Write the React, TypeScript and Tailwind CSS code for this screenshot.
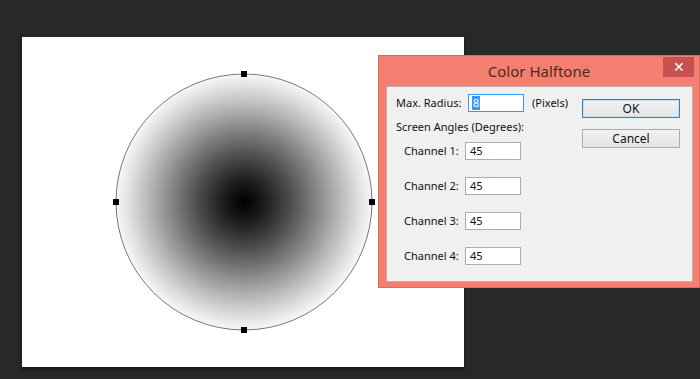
const font = { fontFamily: '"Noto Sans", "Open Sans", sans-serif' }

function Field({ value, selected }: { value: string; selected?: boolean }) {
  return (
    <div
      className={
        selected
          ? 'w-[56px] h-[18px] shrink-0 bg-white border border-[#3399ff] flex items-center pl-[3px]'
          : 'w-[56px] h-[18px] shrink-0 bg-white border border-[#abadb3] flex items-center pl-[4px]'
      }
    >
      {selected ? (
        <span className="bg-[#3399ff] text-white leading-[14px] px-[1px]">{value}</span>
      ) : (
        <span className="leading-[14px]">{value}</span>
      )}
    </div>
  )
}

function Circle() {
  return (
    <svg width="270" height="270" viewBox="0 0 270 270" className="block">
      <defs>
        <radialGradient id="g" cx="50%" cy="50%" r="50%">
          <stop offset="0" stopColor="#000" />
          <stop offset="0.15" stopColor="#1a1a1a" />
          <stop offset="0.35" stopColor="#4a4a4a" />
          <stop offset="0.55" stopColor="#808080" />
          <stop offset="0.75" stopColor="#b8b8b8" />
          <stop offset="0.9" stopColor="#e0e0e0" />
          <stop offset="1" stopColor="#f8f8f8" />
        </radialGradient>
      </defs>
      <circle cx="135" cy="135" r="128" fill="url(#g)" stroke="#777" strokeWidth="1" />
      <rect x="132" y="4" width="6" height="6" fill="#000" />
      <rect x="132" y="260" width="6" height="6" fill="#000" />
      <rect x="4" y="132" width="6" height="6" fill="#000" />
      <rect x="260" y="132" width="6" height="6" fill="#000" />
    </svg>
  )
}

export default function App() {
  return (
    <div className="relative w-[700px] h-[379px] bg-[#282828] overflow-hidden" style={font}>
      {/* canvas */}
      <div className="absolute left-[22px] top-[37px] w-[442px] h-[330px] bg-white shadow-[0_2px_4px_rgba(0,0,0,0.5)]">
        <div className="ml-[87px] mt-[30px]">
          <Circle />
        </div>
      </div>

      {/* dialog */}
      <div className="absolute left-[378px] top-[55px] w-[322px] h-[233px] bg-[#f47f70] flex flex-col border border-[#d96b5d]">
        <div className="relative h-[30px] flex items-center justify-center">
          <span className="text-[15px] text-[#4b2a26]">Color Halftone</span>
          <div className="absolute right-[5px] top-[1px] w-[31px] h-[20px] bg-[#c75050] flex items-center justify-center text-white text-[14px] leading-none">
            ✕
          </div>
        </div>
        <div className="ml-[7px] mr-[6px] mb-[5px] flex-1 bg-[#f0f0f0] border border-[#c9aaa5] flex text-[11px] text-[#111]">
          <div className="flex-1 pl-[9px] pt-[7px]">
            <div className="flex items-center h-[18px]">
              <span className="w-[72px] shrink-0">Max. Radius:</span>
              <Field value="8" selected />
              <span className="ml-[8px]">(Pixels)</span>
            </div>
            <div className="mt-[7px] h-[16px] leading-[16px]">Screen Angles (Degrees):</div>
            <div className="mt-[7px] ml-[8px] flex flex-col gap-[17px]">
              {[1, 2, 3, 4].map(n => (
                <div key={n} className="flex items-center h-[18px]">
                  <span className="w-[61px] shrink-0">Channel {n}:</span>
                  <Field value="45" />
                </div>
              ))}
            </div>
          </div>
          <div className="w-[98px] mr-[12px] mt-[12px] flex flex-col gap-[11px]">
            <div className="h-[19px] border border-[#3c7fb1] bg-gradient-to-b from-[#f2f2f2] to-[#e4e4e4] flex items-center justify-center shadow-[inset_0_0_0_1px_#c4e0f7] text-[12px]">
              OK
            </div>
            <div className="h-[19px] border border-[#acacac] bg-gradient-to-b from-[#f2f2f2] to-[#e4e4e4] flex items-center justify-center text-[12px]">
              Cancel
            </div>
          </div>
        </div>
      </div>
    </div>
  )
}
